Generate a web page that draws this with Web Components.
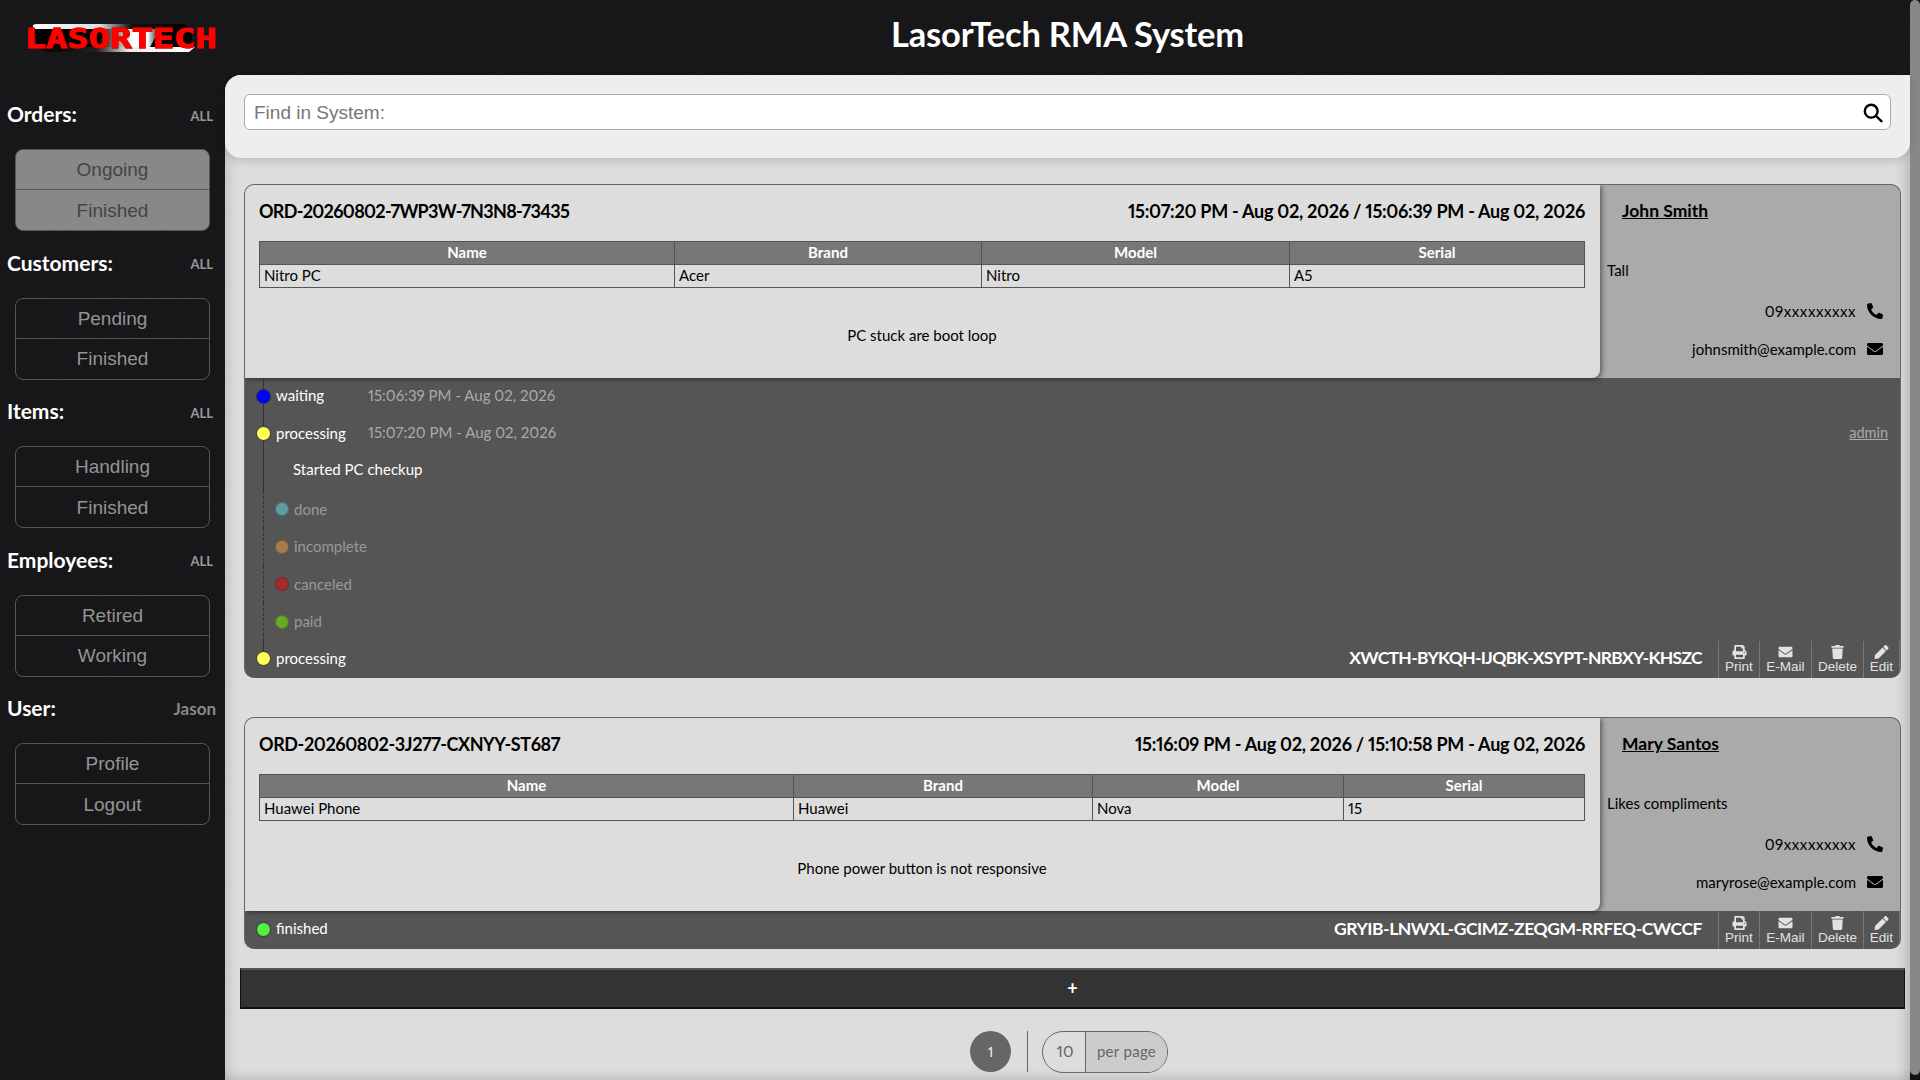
<!DOCTYPE html>
<html lang="en">
<head>
<meta charset="utf-8">
<title>LasorTech RMA System</title>
<style>
html,body{margin:0;padding:0;height:100%;overflow:hidden;background:#131315}
body{font-family:"Lato","Liberation Sans",sans-serif;font-variant-numeric:proportional-nums}
</style>
</head>
<body>
<rma-app>
  <side-section slot="nav" title="Orders:" aside="ALL" active><nav-item>Ongoing</nav-item><nav-item>Finished</nav-item></side-section>
  <side-section slot="nav" title="Customers:" aside="ALL"><nav-item>Pending</nav-item><nav-item>Finished</nav-item></side-section>
  <side-section slot="nav" title="Items:" aside="ALL"><nav-item>Handling</nav-item><nav-item>Finished</nav-item></side-section>
  <side-section slot="nav" title="Employees:" aside="ALL"><nav-item>Retired</nav-item><nav-item>Working</nav-item></side-section>
  <side-section slot="nav" title="User:" aside="Jason" big><nav-item>Profile</nav-item><nav-item>Logout</nav-item></side-section>

  <order-card ordno="ORD-20260802-7WP3W-7N3N8-73435" ordls="-.7" times="15:07:20 PM - Aug 02, 2026 / 15:06:39 PM - Aug 02, 2026"
    cols="415,307,308,295" item="Nitro PC" brand="Acer" model="Nitro" serial="A5" desc="PC stuck are boot loop"
    customer="John Smith" note="Tall" phone="09xxxxxxxxx" email="johnsmith@example.com">
    <tl-row color="#0000ff" rail="solid" label="waiting" date="15:06:39 PM - Aug 02, 2026"></tl-row>
    <tl-row color="#ffff55" rail="solid" label="processing" date="15:07:20 PM - Aug 02, 2026" by="admin"></tl-row>
    <tl-note rail="solid">Started PC checkup</tl-note>
    <tl-row minor color="#5f9ea0" rail="dashed" label="done"></tl-row>
    <tl-row minor color="#a87c4a" rail="dashed" label="incomplete"></tl-row>
    <tl-row minor color="#a52a2a" rail="dashed" label="canceled"></tl-row>
    <tl-row minor color="#6aa825" rail="dashed" label="paid"></tl-row>
    <tl-row color="#ffff55" rail="top" label="processing"><card-actions ls="-.68" code="XWCTH-BYKQH-IJQBK-XSYPT-NRBXY-KHSZC"></card-actions></tl-row>
  </order-card>

  <order-card ordno="ORD-20260802-3J277-CXNYY-ST687" ordls="-.4" times="15:16:09 PM - Aug 02, 2026 / 15:10:58 PM - Aug 02, 2026"
    cols="534,299,251,241" item="Huawei Phone" brand="Huawei" model="Nova" serial="15" desc="Phone power button is not responsive"
    customer="Mary Santos" note="Likes compliments" phone="09xxxxxxxxx" email="maryrose@example.com">
    <tl-row color="#55ee44" label="finished"><card-actions ls="-.45" code="GRYIB-LNWXL-GCIMZ-ZEQGM-RRFEQ-CWCCF"></card-actions></tl-row>
  </order-card>
</rma-app>

<script>
const ICONS={
 phone:['0 0 512 512','<path transform="matrix(-1 0 0 1 512 0)" d="M493.4 24.6l-104-24c-11.3-2.6-22.9 3.3-27.5 13.9l-48 112c-4.2 9.8-1.4 21.3 6.9 28l60.6 49.6c-36 76.7-98.9 140.5-177.2 177.2l-49.6-60.6c-6.8-8.3-18.2-11.1-28-6.9l-112 48C3.9 366.5-2 378.1.6 389.4l24 104C27.1 504.2 36.7 512 48 512c256.1 0 464-207.5 464-464 0-11.2-7.7-20.9-18.6-23.4z"/>'],
 mail:['0 0 512 512','<path d="M502.3 190.8c3.9-3.1 9.7-.2 9.7 4.7V400c0 26.5-21.5 48-48 48H48c-26.5 0-48-21.5-48-48V195.6c0-5 5.7-7.8 9.7-4.7 22.4 17.4 52.1 39.5 154.1 113.6 21.1 15.4 56.7 47.8 92.2 47.6 35.7.3 72-32.8 92.3-47.6 102-74.1 131.6-96.3 154-113.7zM256 320c23.2.4 56.6-29.2 73.4-41.4 132.7-96.3 142.8-104.7 173.4-128.7 5.8-4.5 9.2-11.5 9.2-18.9v-19c0-26.5-21.5-48-48-48H48C21.5 64 0 85.5 0 112v19c0 7.4 3.4 14.3 9.2 18.9 30.6 23.9 40.7 32.4 173.4 128.7 16.8 12.2 50.2 41.8 73.4 41.4z"/>'],
 print:['0 0 512 512','<path d="M448 192V77.25c0-8.49-3.37-16.62-9.37-22.63L393.37 9.37c-6-6-14.14-9.37-22.63-9.37H96C78.33 0 64 14.33 64 32v160c-35.35 0-64 28.65-64 64v112c0 8.84 7.16 16 16 16h48v96c0 17.67 14.33 32 32 32h320c17.67 0 32-14.33 32-32v-96h48c8.84 0 16-7.16 16-16V256c0-35.35-28.65-64-64-64zm-64 256H128v-96h256v96zm0-224H128V64h192v48c0 8.84 7.16 16 16 16h48v96zm48 72c-13.25 0-24-10.75-24-24 0-13.26 10.75-24 24-24s24 10.74 24 24c0 13.25-10.75 24-24 24z"/>'],
 trash:['0 0 448 512','<path d="M432 32H312l-9.4-18.7A24 24 0 0 0 281.1 0H166.8a23.72 23.72 0 0 0-21.4 13.3L136 32H16A16 16 0 0 0 0 48v32a16 16 0 0 0 16 16h416a16 16 0 0 0 16-16V48a16 16 0 0 0-16-16zM53.2 467a48 48 0 0 0 47.9 45h245.8a48 48 0 0 0 47.9-45L416 128H32z"/>'],
 pencil:['0 0 512 512','<path d="M497.9 142.1l-46.1 46.1c-4.7 4.7-12.3 4.7-17 0l-111-111c-4.7-4.7-4.7-12.3 0-17l46.1-46.1c18.7-18.7 49.1-18.7 67.9 0l60.1 60.1c18.8 18.7 18.8 49.1 0 67.9zM284.2 99.8L21.6 362.4.4 483.9c-2.9 16.4 11.4 30.6 27.8 27.8l121.5-21.3 262.6-262.6c4.7-4.7 4.7-12.3 0-17l-111-111c-4.8-4.7-12.4-4.7-17.1 0z"/>']
};
const icon=(n,w,h)=>`<svg width="${w}" height="${h||w}" viewBox="${ICONS[n][0]}" fill="currentColor" aria-hidden="true">${ICONS[n][1]}</svg>`;
const NOISE="url(\"data:image/svg+xml,%3Csvg xmlns='http://www.w3.org/2000/svg' width='200' height='200'%3E%3Cfilter id='n'%3E%3CfeTurbulence type='fractalNoise' baseFrequency='.9' numOctaves='2' stitchTiles='stitch'/%3E%3CfeColorMatrix values='0 0 0 0 1 0 0 0 0 1 0 0 0 0 1 0 0 0 .07 0'/%3E%3C/filter%3E%3Crect width='200' height='200' filter='url(%23n)'/%3E%3C/svg%3E\")";

class Base extends HTMLElement{
  connectedCallback(){
    if(this.shadowRoot)return;
    this.attachShadow({mode:'open'}).innerHTML=this.render();
  }
  a(n){return this.getAttribute(n)||''}
}

customElements.define('rma-app',class extends Base{render(){return `
<style>
:host{display:grid;grid-template-columns:225px 1fr 10px;grid-template-rows:75px 1fr;width:1920px;height:1080px;overflow:hidden;
  background:#0f0f11 ${NOISE};color:#000}
.logo{grid-column:1;grid-row:1;display:flex;align-items:center;padding-left:24px}
.head{grid-column:2;grid-row:1;display:flex;align-items:center;justify-content:center;color:#fff;font-size:34.5px;font-weight:700;letter-spacing:-.2px;padding-bottom:9px}
nav{grid-column:1;grid-row:2;display:flex;flex-direction:column;padding-top:20px}
main{grid-column:2;grid-row:2;background:#ddd;border-radius:16px 0 0 0;display:flex;flex-direction:column;position:relative;
  box-shadow:inset 14px 0 12px -10px rgba(0,0,0,.12),inset -14px 0 12px -10px rgba(0,0,0,.18),inset 0 -12px 10px -8px rgba(0,0,0,.12)}
.cards{display:flex;flex-direction:column;gap:39px;padding:26px 9px 0 19px}
scroll-thumb{grid-column:3;grid-row:1 / 3}
</style>
<div class="logo"><rma-logo></rma-logo></div>
<div class="head">LasorTech RMA System</div>
<nav><slot name="nav"></slot></nav>
<main>
  <rma-search></rma-search>
  <div class="cards"><slot></slot></div>
  <add-bar></add-bar>
  <rma-pager></rma-pager>
</main>
<scroll-thumb></scroll-thumb>`}});

customElements.define('rma-logo',class extends Base{render(){return `
<style>:host{display:block;width:196px;height:44px}svg{display:block}</style>
<svg width="196" height="44" viewBox="0 0 196 44">
<defs>
<linearGradient id="g" x1="0" x2="1" y1="0" y2="0">
<stop offset="0" stop-color="#fff"/><stop offset=".42" stop-color="#ddd"/><stop offset=".62" stop-color="#111"/><stop offset="1" stop-color="#000"/></linearGradient>
<linearGradient id="h" x1="0" x2="1" y1="0" y2="0">
<stop offset="0" stop-color="#000"/><stop offset=".38" stop-color="#222"/><stop offset=".58" stop-color="#eee"/><stop offset="1" stop-color="#fff"/></linearGradient>
<linearGradient id="d" x1="0" x2="1" y1="0" y2="0">
<stop offset="0" stop-color="#000"/><stop offset=".55" stop-color="#fff"/><stop offset=".8" stop-color="#fff"/><stop offset="1" stop-color="#000"/></linearGradient>
<filter id="o" x="-5%" y="-20%" width="110%" height="140%"><feDropShadow dx="0" dy="0" stdDeviation=".5" flood-color="#000" flood-opacity="1"/></filter>
</defs>
<path d="M9 9Q10 8 14 8H160L168 13H9Z" fill="url(#g)"/>
<path d="M9 13H168V31H14Z" fill="#000"/>
<path d="M14 31H171L165 36H24Z" fill="url(#h)"/>
<path d="M80 13H136L126 31H74Z" fill="url(#d)"/>
<text x="1" y="32" font-family="'DejaVu Sans Mono',monospace" font-weight="700" font-size="26" fill="#f00" stroke="#f00" stroke-width="1" stroke-linejoin="miter" textLength="192" lengthAdjust="spacingAndGlyphs" filter="url(#o)">LASORTECH</text>
</svg>`}});

customElements.define('side-section',class extends Base{render(){return `
<style>
:host{display:block;height:148.5px;box-sizing:border-box;color:#fff}
.top{display:flex;justify-content:space-between;align-items:center;height:38px;padding:0 12px 0 7px}
h3{margin:0;font-size:21px;font-weight:700;line-height:36px}
span{font-size:${this.hasAttribute('big')?'17':'13'}px;font-weight:700;color:${this.hasAttribute('big')?'#888':'#999'};${this.hasAttribute('big')?'margin-right:-3px':'padding-top:3px'}}
.grp{margin:16px 15px 0;height:82px;box-sizing:border-box;border:1px solid #555;border-radius:8px;overflow:hidden;display:grid;grid-template-rows:1fr 1fr;
  ${this.hasAttribute('active')?'background:#888;--nc:#444;':'--nc:#949494;'}}
::slotted(nav-item:first-child){border-bottom:1px solid #555}
</style>
<div class="top"><h3>${this.a('title')}</h3><span>${this.a('aside')}</span></div>
<div class="grp"><slot></slot></div>`}});

customElements.define('nav-item',class extends Base{render(){return `
<style>:host{display:flex;align-items:center;justify-content:center;font:19px "Liberation Sans",sans-serif;color:var(--nc,#888);padding-top:1px;box-sizing:border-box}</style><slot></slot>`}});

customElements.define('rma-search',class extends Base{render(){return `
<style>
:host{display:block;background:#eee;border-radius:16px 0 16px 16px;padding:19px 19px 27px;box-shadow:0 3px 8px rgba(0,0,0,.15);height:83px;box-sizing:border-box;position:relative}
.box{height:36px;box-sizing:border-box;background:#fff;border:1px solid #aaa;border-radius:6px;display:flex;align-items:center;justify-content:space-between;padding:0 7px 0 9px}
span{font:19px "Liberation Sans",sans-serif;color:#777;padding-top:1px}
svg{display:block}
</style>
<div class="box"><span>Find in System:</span>
<svg width="20" height="20" viewBox="0 0 20 20" fill="none" stroke="#000" stroke-width="2.4" stroke-linecap="round" style="margin-top:1px"><circle cx="8.2" cy="8.2" r="6.4"/><path d="M13 13l5.4 5.2"/></svg></div>`}});

customElements.define('order-card',class extends Base{render(){
const c=this.a('cols').split(',');
return `
<style>
:host{display:block;border:1px solid #666;border-bottom:0;border-radius:10px;overflow:hidden;background:#555}
.top{display:grid;grid-template-columns:1355px 1fr;height:193px;background:#aaa}
.info{background:#ddd;border-radius:0 0 8px 0;box-shadow:2px 1px 5px rgba(0,0,0,.45);padding:0 15px 0 14px;display:flex;flex-direction:column;position:relative}
.line{display:flex;justify-content:space-between;align-items:center;height:56px;padding-bottom:4px;box-sizing:border-box;font-size:18px;font-weight:700;flex:none;color:#000}
.ord{letter-spacing:${this.a('ordls')}px}
.tm{letter-spacing:-.27px}
table{border-collapse:collapse;table-layout:fixed;width:1325px;font-size:15px;flex:none}
th{background:#777;color:#fff;font-weight:700;height:23px;padding:0 0 3px;border:1px solid #555;box-sizing:border-box}
td{height:23px;padding:0 4px 3px;border:1px solid #555;color:#000;box-sizing:border-box}
.desc{flex:1;display:flex;align-items:center;justify-content:center;font-size:15px;padding-bottom:18px;padding-top:21px;box-sizing:border-box;color:#000}
.side{display:flex;flex-direction:column;padding:0 17px 0 7px;font-size:15px;color:#000}
.side b{display:block;font-size:17.5px;line-height:52px;height:56px;margin-left:15px;text-decoration:underline}
.note{margin-top:19px;height:20px;line-height:20px}
.c{display:flex;justify-content:flex-end;align-items:center;gap:11px;height:38px}
.c svg{flex:none;display:block}
.c.ph{margin-top:12px}
.c.ph span{letter-spacing:.55px}
</style>
<div class="top">
 <div class="info">
  <div class="line"><span class="ord">${this.a('ordno')}</span><span class="tm">${this.a('times')}</span></div>
  <table><colgroup>${c.map(w=>`<col style="width:${w}px">`).join('')}</colgroup>
  <tr><th>Name</th><th>Brand</th><th>Model</th><th>Serial</th></tr>
  <tr><td>${this.a('item')}</td><td>${this.a('brand')}</td><td>${this.a('model')}</td><td>${this.a('serial')}</td></tr></table>
  <div class="desc">${this.a('desc')}</div>
 </div>
 <div class="side">
  <b>${this.a('customer')}</b>
  <div class="note">${this.a('note')}</div>
  <div class="c ph"><span>${this.a('phone')}</span>${icon('phone',16)}</div>
  <div class="c"><span>${this.a('email')}</span>${icon('mail',16)}</div>
 </div>
</div>
<slot></slot>`}});

const railCss=r=>r==='solid'?':host::before{content:"";position:absolute;left:18px;top:0;bottom:0;border-left:1px solid #333}':
  r==='dashed'?':host::before{content:"";position:absolute;left:18px;top:0;bottom:0;border-left:1px dashed #333}':
  r==='top'?':host::before{content:"";position:absolute;left:18px;top:-4px;bottom:50%;border-left:1px solid #333}':'';

customElements.define('tl-row',class extends Base{render(){
const m=this.hasAttribute('minor');
return `
<style>
:host{display:flex;align-items:center;height:37.5px;position:relative;font-size:15px;color:${m?'#999':'#fff'}}
${railCss(this.a('rail'))}
.dot{flex:none;box-sizing:border-box;border-radius:50%;background:${this.a('color')};border:1px solid ${m?'rgba(40,40,40,.35)':'#333'};position:relative;z-index:1;
 width:${m?14:15}px;height:${m?14:15}px;margin-left:${m?30:11}px;margin-right:5px;margin-top:${m?0:-1}px}
.lab{min-width:92px;margin-top:${m?-1:-3}px}
.date{color:#aaa;margin-top:-4px}
.by{margin-left:auto;margin-right:12px;color:#aaa;text-decoration:underline;font-size:14.5px;margin-top:-3px}
.end{margin-left:auto;display:flex;height:100%}
</style>
<span class="dot"></span><span class="lab">${this.a('label')}</span>
${this.a('date')?`<span class="date">${this.a('date')}</span>`:''}
${this.a('by')?`<span class="by">${this.a('by')}</span>`:`<div class="end"><slot></slot></div>`}`}});

customElements.define('tl-note',class extends Base{render(){return `
<style>:host{display:flex;align-items:center;height:37.5px;position:relative;padding-left:48px;font-size:15px;color:#fff;box-sizing:border-box;padding-bottom:5px}
${railCss('solid')}</style><slot></slot>`}});

customElements.define('card-actions',class extends Base{render(){return `
<style>
:host{display:flex;align-items:center;height:37.5px;color:#fff}
.code{font-size:17.5px;font-weight:700;margin-right:16px;letter-spacing:${this.a('ls')}px;margin-top:-3px}
</style>
<span class="code">${this.a('code')}</span>
<act-btn i="print" w="41">Print</act-btn><act-btn i="mail" w="52">E-Mail</act-btn><act-btn i="trash" w="52">Delete</act-btn><act-btn i="pencil" w="37" last>Edit</act-btn>`}});

customElements.define('act-btn',class extends Base{render(){return `
<style>
:host{display:flex;flex-direction:column;align-items:center;justify-content:flex-end;width:${this.a('w')}px;height:100%;box-sizing:border-box;
 border-left:1px solid #777;${this.hasAttribute('last')?'border-right:1px solid #777;':''}color:#e2e2e2;font:13.5px/14px "Liberation Sans",sans-serif;padding-bottom:4px}
svg{display:block;margin-bottom:1px}
</style>${icon(this.a('i'),15,14)}<slot></slot>`}});

customElements.define('add-bar',class extends Base{render(){return `
<style>:host{display:flex;align-items:center;justify-content:center;box-sizing:border-box;height:41px;margin:19px 5px 0 15px;background:#333;
 border-top:2px solid #555;border-bottom:2px solid #111;border-left:1px solid #111;border-right:1px solid #111;color:#fff;font-size:18px;font-weight:700;flex:none}</style>+`}});

customElements.define('rma-pager',class extends Base{render(){return `
<style>
:host{display:flex;justify-content:center;align-items:center;margin-top:22px;height:42px;flex:none;color:#666;font-size:15px;padding-left:3px}
.one{width:41px;height:41px;border-radius:50%;background:#666;color:#eee;display:flex;align-items:center;justify-content:center;font-size:14px}
.sep{width:1px;height:41px;background:#666;margin:0 14px 0 16px}
.pill{display:flex;height:40px;border:1px solid #666;border-radius:21px;overflow:hidden}
.pill span{display:flex;align-items:center;justify-content:center;padding-bottom:2px}
.n{width:43px;border-right:1px solid #666;padding-left:2px;box-sizing:border-box;font-size:16px}
.t{width:81px;background:#ccc;font-size:15px;letter-spacing:.3px;color:#666}
</style>
<div class="one">1</div><div class="sep"></div>
<div class="pill"><span class="n">10</span><span class="t">per page</span></div>`}});

customElements.define('scroll-thumb',class extends Base{render(){return `
<style>:host{display:block;background:#111;height:1080px}
div{height:1075px;background:#888;border-radius:5px}</style><div></div>`}});
</script>
</body>
</html>
